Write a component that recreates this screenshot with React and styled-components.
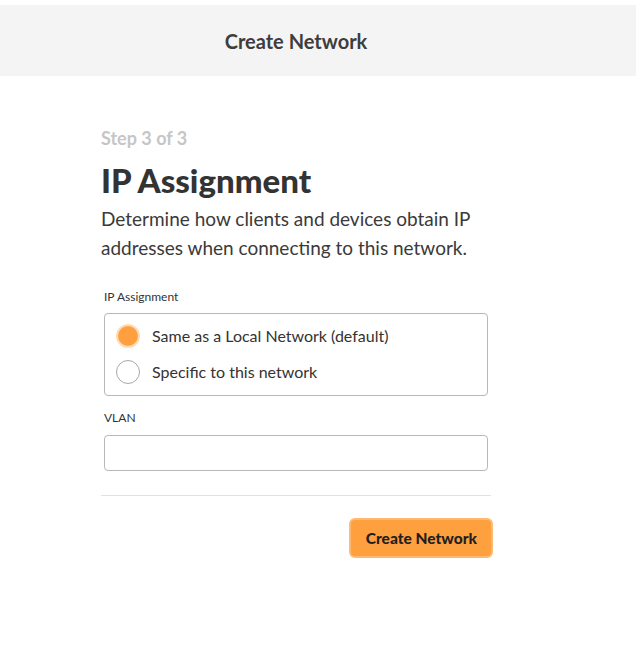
import React, { useState } from "react";
import styled, { createGlobalStyle } from "styled-components";

const GlobalStyle = createGlobalStyle`
  body {
    margin: 0;
    background: #ffffff;
    font-family: Lato, "Noto Sans", sans-serif;
    color: #333333;
  }
`;

const Page = styled.div`
  width: 636px;
  padding-top: 5px;
`;

const Header = styled.header`
  background: #f4f4f4;
  height: 71px;
  display: flex;
  align-items: center;
`;

const HeaderTitle = styled.h2`
  width: 592px;
  margin: 0;
  text-align: center;
  font-size: 20px;
  font-weight: 700;
  color: #3d3d3d;
`;

const Content = styled.main`
  width: 390px;
  margin-left: 101px;
  padding-top: 50px;
`;

const Step = styled.div`
  font-size: 18px;
  font-weight: 700;
  color: #c6c6c6;
  line-height: 24px;
`;

const Title = styled.h1`
  margin: 10px 0 0;
  font-size: 33px;
  font-weight: 900;
  line-height: 40px;
  color: #333333;
`;

const Description = styled.p`
  margin: 4px 0 0;
  font-size: 19px;
  line-height: 29px;
  color: #3a3a3a;
`;

const Field = styled.div`
  margin-left: 3px;
  width: 384px;
  margin-top: ${(p) => p.$top}px;
`;

const Label = styled.div`
  font-size: 12px;
  line-height: 16px;
  color: #333333;
  margin-bottom: ${(p) => p.$gap || 9}px;
`;

const RadioGroup = styled.div`
  border: 1px solid #b8b8b8;
  border-radius: 4px;
  padding: 10px 11px 11px;
  display: flex;
  flex-direction: column;
  gap: 12px;
`;

const Option = styled.label`
  display: flex;
  align-items: center;
  gap: 12px;
  font-size: 16px;
  line-height: 24px;
  color: #333333;
  cursor: pointer;
`;

const Dot = styled.span`
  width: 24px;
  height: 24px;
  box-sizing: border-box;
  border-radius: 50%;
  border: ${(p) => (p.$on ? "2px solid #ffdcb5" : "1px solid #a8a8a8")};
  background: ${(p) => (p.$on ? "#ff9f3f" : "#ffffff")};
  flex-shrink: 0;
`;

const Input = styled.input`
  display: block;
  box-sizing: border-box;
  width: 100%;
  height: 36px;
  border: 1px solid #b8b8b8;
  border-radius: 4px;
  outline: none;
  font: inherit;
`;

const Divider = styled.hr`
  margin: 24px 0 0;
  border: none;
  border-top: 1px solid #e2e2e2;
`;

const Footer = styled.div`
  display: flex;
  justify-content: flex-end;
  margin-top: 22px;
  margin-right: -2px;
`;

const Button = styled.button`
  height: 40px;
  padding: 0 14px 0 15px;
  background: #ffa03e;
  border: 2px solid #ffb971;
  border-radius: 6px;
  font-family: inherit;
  font-size: 15.5px;
  font-weight: 900;
  color: #1f1f1f;
  cursor: pointer;
`;

const options = ["Same as a Local Network (default)", "Specific to this network"];

export default function App() {
  const [choice, setChoice] = useState(0);
  return (
    <Page>
      <GlobalStyle />
      <Header>
        <HeaderTitle>Create Network</HeaderTitle>
      </Header>
      <Content>
        <Step>Step 3 of 3</Step>
        <Title>IP Assignment</Title>
        <Description>
          Determine how clients and devices obtain IP addresses when connecting to this network.
        </Description>
        <Field $top={27}>
          <Label $gap={8}>IP Assignment</Label>
          <RadioGroup>
            {options.map((o, i) => (
              <Option key={o} onClick={() => setChoice(i)}>
                <Dot $on={choice === i} />
                {o}
              </Option>
            ))}
          </RadioGroup>
        </Field>
        <Field $top={14}>
          <Label>VLAN</Label>
          <Input />
        </Field>
        <Divider />
        <Footer>
          <Button>Create Network</Button>
        </Footer>
      </Content>
    </Page>
  );
}
